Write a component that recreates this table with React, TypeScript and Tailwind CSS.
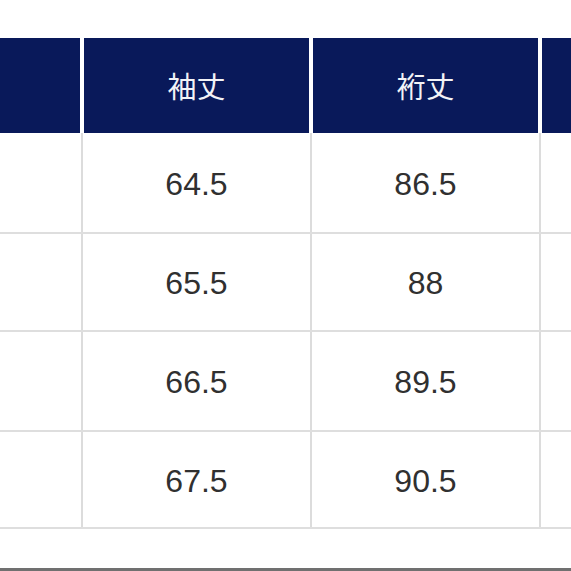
const headers = ["", "袖丈", "裄丈", ""];

const rows = [
  { h: "h-[101px]", cells: ["", "64.5", "86.5", ""] },
  { h: "h-[98px]", cells: ["", "65.5", "88", ""] },
  { h: "h-[100px]", cells: ["", "66.5", "89.5", ""] },
  { h: "h-[97px]", cells: ["", "67.5", "90.5", ""] },
];

const widths = ["w-[80px]", "w-[225px]", "w-[225px]", "flex-1"];

function Divider() {
  return (
    <div className="w-[4px] shrink-0 flex justify-center">
      <div className="w-[2px] h-full bg-[#dcdcdc]" />
    </div>
  );
}

export default function App() {
  return (
    <div className="w-[571px] h-[571px] overflow-hidden bg-white flex flex-col pt-[38px]">
      {/* header */}
      <div className="flex gap-[4px] h-[95px]">
        {headers.map((t, i) => (
          <div
            key={i}
            className={`${widths[i]} shrink-0 bg-[#09195a] flex items-center justify-center text-[29px] text-[#f2f3f7] font-['Noto_Sans_CJK_JP',sans-serif]`}
          >
            {t}
          </div>
        ))}
      </div>

      {/* body */}
      {rows.map((r, ri) => (
        <div key={ri} className={`${r.h} flex border-b-2 border-[#dedede]`}>
          {r.cells.map((c, ci) => (
            <div key={ci} className="contents">
              {ci > 0 && <Divider />}
              <div
                className={`${widths[ci]} shrink-0 flex items-center justify-center pt-[2px] text-[32px] text-[#303030] font-['Liberation_Sans',Arial,sans-serif]`}
              >
                {c}
              </div>
            </div>
          ))}
        </div>
      ))}

      <div className="flex-1" />
      <div className="h-[3px] bg-[#707070]" />
    </div>
  );
}
